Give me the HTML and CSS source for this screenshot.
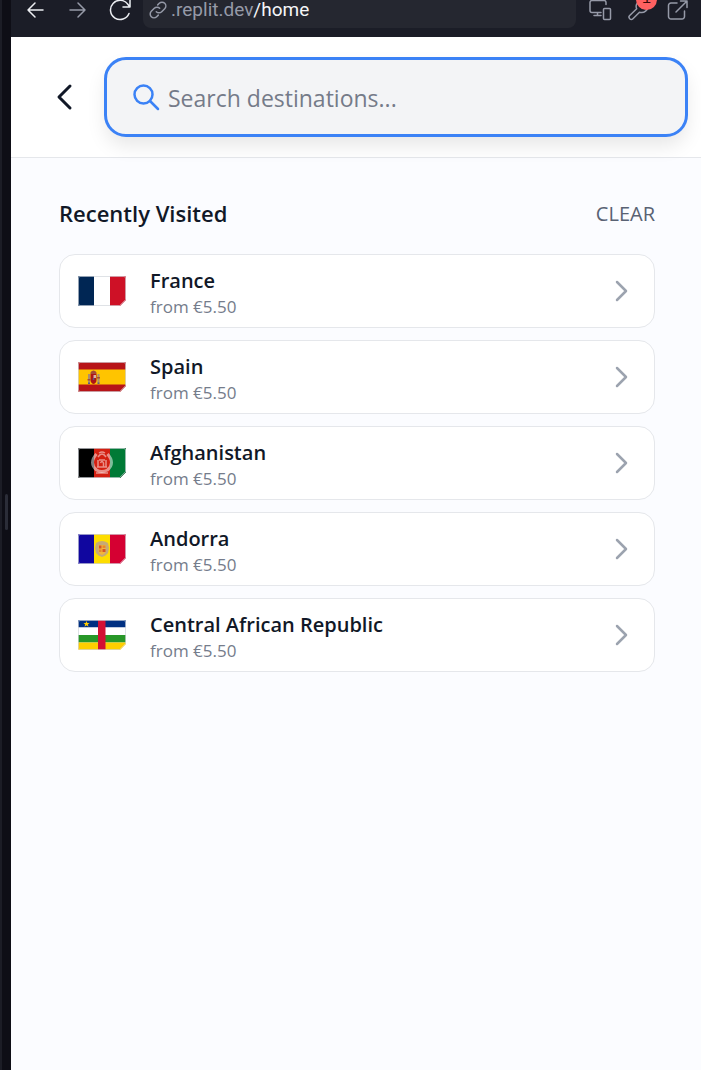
FILE: index.html
```html
<!DOCTYPE html>
<html lang="en">
<head>
<meta charset="utf-8">
<meta name="viewport" content="width=device-width, initial-scale=1">
<title>Home</title>
<link rel="stylesheet" href="styles.css">
</head>
<body>
<div class="workspace">
  <div class="gutter"><span class="grip"></span></div>
  <div class="pane">
    <div class="toolbar">
      <button class="tool" aria-label="Back"><svg width="20" height="20" viewBox="0 0 20 20"><path d="M18 10H3M10 3L3 10l7 7"/></svg></button>
      <button class="tool dim" aria-label="Forward"><svg width="20" height="20" viewBox="0 0 20 20"><path d="M3 10h15M11 3l7 7-7 7"/></svg></button>
      <button class="tool reload" aria-label="Reload"><svg width="24" height="24" viewBox="0 0 24 24"><path d="M22 15.500A9.600 9.600 0 1 1 20.800 6.200L22.500 8.500M23 2v7h-7"/></svg></button>
      <div class="address">
        <svg class="dim" width="18" height="18" viewBox="0 0 18 18"><path d="M7.300 10.700a3.800 3.800 0 0 0 5.400 0l3-3a3.800 3.800 0 0 0-5.400-5.400L8.700 3.900M10.700 7.300a3.800 3.800 0 0 0-5.400 0l-3 3a3.800 3.800 0 0 0 5.400 5.400l1.600-1.600"/></svg>
        <span class="url">.replit.dev<span class="path">/home</span></span>
      </div>
      <div class="tools">
        <button class="tool dim" aria-label="Devices"><svg width="24" height="24" viewBox="0 0 24 24"><path d="M18 6.500V4.500a2 2 0 0 0-2-2H4a2 2 0 0 0-2 2v8a2 2 0 0 0 2 2h9M6 17.500h7M9.500 14.500v3"/><rect x="15.500" y="10.500" width="7" height="11" rx="1"/></svg></button>
        <button class="tool dim" aria-label="Developer tools, 1 issue"><svg width="24" height="24" viewBox="0 0 24 24"><path d="M20.500 7.500l-3 3-3-1-1-3 3-3c-3-1-6 .5-7 3-.6 1.600-.4 3 .2 4.300L2.700 17.500a2.200 2.200 0 0 0 3.200 3.200l6.600-6.500c4.500 1.500 9-2 8-6.700z"/></svg><span class="badge">1</span></button>
        <button class="tool dim" aria-label="Open in new tab"><svg width="24" height="24" viewBox="0 0 24 24"><path d="M11 5H5a2.500 2.500 0 0 0-2.500 2.500v11A2.500 2.500 0 0 0 5 21h11a2.500 2.500 0 0 0 2.500-2.500V13M10 14L21 3M14.500 3H21v6.500"/></svg></button>
      </div>
    </div>
    <header class="header">
      <button class="back" aria-label="Go back"><svg width="32" height="32" viewBox="0 0 32 32"><path d="M21 5L10 16l11 11"/></svg></button>
      <label class="search">
        <svg width="28" height="28" viewBox="0 0 28 28"><circle cx="11.500" cy="11.500" r="9"/><path d="M18 18l8 8"/></svg>
        <input type="text" aria-label="Search destinations" placeholder="Search destinations...">
      </label>
    </header>
    <main class="content">
      <div class="heading">
        <h2 class="title">Recently Visited</h2>
        <button class="clear">CLEAR</button>
      </div>
      <div class="list">
        <button class="card">
          <svg class="flag" viewBox="0 0 48 30"><path fill="#fff" d="M0 0h48v30H0z"/><path fill="#002654" d="M0 0h16v30H0z"/><path fill="#ce1126" d="M32 0h16v30H32z"/><path class="edge" d="M2 .5h44a1.500 1.500 0 0 1 1.500 1.500v21.800l-5.700 5.700H2A1.500 1.500 0 0 1 .5 28V2A1.500 1.500 0 0 1 2 .5z"/></svg>
          <span class="info"><span class="name">France</span><span class="price">from €5.50</span></span>
          <svg class="chevron" viewBox="0 0 24 24"><path d="M7 3l9 9-9 9"/></svg>
        </button>
        <button class="card">
          <svg class="flag" viewBox="0 0 48 30"><path fill="#b71418" d="M0 0h48v30H0z"/><path fill="#ffc400" d="M0 7.500h48v15H0z"/><path fill="#ad1519" d="M12.500 12h6v6q0 3-3 4-3-1-3-4z"/><path fill="#aa8c73" d="M10 12h2v9h-2zM19.500 12h2v9h-2z"/><path fill="#a64b36" d="M12.500 12q-.5-3 3-3.500 3.500.5 3 3.500zM9.500 17h3v1.500h-3zM19 15h3v1.500h-3z"/><path fill="#d6b4aa" d="M15.500 13h2.500v3h-2.500z"/><path fill="#585d86" d="M14.800 16h1.500v2h-1.500zM10 20.500h2v1.500h-2zM19.500 20.500h2v1.500h-2z"/><path class="edge" d="M2 .5h44a1.500 1.500 0 0 1 1.500 1.500v21.800l-5.700 5.700H2A1.500 1.500 0 0 1 .5 28V2A1.500 1.500 0 0 1 2 .5z"/></svg>
          <span class="info"><span class="name">Spain</span><span class="price">from €5.50</span></span>
          <svg class="chevron" viewBox="0 0 24 24"><path d="M7 3l9 9-9 9"/></svg>
        </button>
        <button class="card">
          <svg class="flag" viewBox="0 0 48 30"><path fill="#000" d="M0 0h48v30H0z"/><path fill="#d32011" d="M16 0h16v30H16z"/><path fill="#007a36" d="M32 0h16v30H32z"/><g fill="none" stroke="#fff" stroke-opacity=".5"><path stroke-width="3" d="M18.500 6q-8 9 0 16 5 3 11 0 8-7 0-16"/><path stroke-width="1.500" d="M20 9q4-6 8 0M19 19h10M20 12v7M28 12v7M21 12h6M22.500 15q1.500-3 3 0v4M18 25h12M21 5q3-2 6 0"/></g><path class="edge" d="M2 .5h44a1.500 1.500 0 0 1 1.500 1.500v21.800l-5.700 5.700H2A1.500 1.500 0 0 1 .5 28V2A1.500 1.500 0 0 1 2 .5z"/></svg>
          <span class="info"><span class="name">Afghanistan</span><span class="price">from €5.50</span></span>
          <svg class="chevron" viewBox="0 0 24 24"><path d="M7 3l9 9-9 9"/></svg>
        </button>
        <button class="card">
          <svg class="flag" viewBox="0 0 48 30"><path fill="#10069f" d="M0 0h16v30H0z"/><path fill="#fedd00" d="M16 0h16v30H16z"/><path fill="#d50032" d="M32 0h16v30H32z"/><path fill="#c6aa76" d="M18 9l3-1.500 3-.5 3 .5 3 1.500 1 5-1 5-2.500 2.500-3.500 1.500-3.500-1.500L18 19l-1-5z"/><path fill="#f2b53a" d="M20.500 11h7v7q-1 2.500-3.500 3-2.500-.5-3.500-3z"/><path fill="#d4532a" d="M21 11.500h2.500v3H21zM24.500 15h3v3h-3z"/><path fill="#e6852e" d="M24.500 11.500h3V14h-3zM21 15.500h2.500v2.500H21z"/><path class="edge" d="M2 .5h44a1.500 1.500 0 0 1 1.500 1.500v21.800l-5.700 5.700H2A1.500 1.500 0 0 1 .5 28V2A1.500 1.500 0 0 1 2 .5z"/></svg>
          <span class="info"><span class="name">Andorra</span><span class="price">from €5.50</span></span>
          <svg class="chevron" viewBox="0 0 24 24"><path d="M7 3l9 9-9 9"/></svg>
        </button>
        <button class="card">
          <svg class="flag" viewBox="0 0 48 30"><path fill="#003082" d="M0 0h48v7.500H0z"/><path fill="#fff" d="M0 7.500h48V15H0z"/><path fill="#289728" d="M0 15h48v7.500H0z"/><path fill="#ffce00" d="M0 22.500h48V30H0z"/><path fill="#d21034" d="M20 0h7.500v30H20z"/><path fill="#ffce00" d="M8.500 1l.8 2h2.200l-1.700 1.400.7 2.300-2-1.400-2 1.400.7-2.300L5.500 3h2.200z"/><path class="edge" d="M2 .5h44a1.500 1.500 0 0 1 1.500 1.500v21.800l-5.700 5.700H2A1.500 1.500 0 0 1 .5 28V2A1.500 1.500 0 0 1 2 .5z"/></svg>
          <span class="info"><span class="name">Central African Republic</span><span class="price">from €5.50</span></span>
          <svg class="chevron" viewBox="0 0 24 24"><path d="M7 3l9 9-9 9"/></svg>
        </button>
      </div>
    </main>
  </div>
</div>
</body>
</html>
```
FILE: styles.css
```css
* { box-sizing: border-box; }
body {
  margin: 0;
  font-family: "Open Sans", "Noto Sans", sans-serif;
  color: #111827;
}
button {
  margin: 0;
  padding: 0;
  border: 0;
  background: none;
  font: inherit;
  color: inherit;
  text-align: left;
}
svg { display: block; flex: none; }
.workspace { display: flex; min-height: 100vh; }
.gutter {
  flex: none;
  display: flex;
  align-items: center;
  justify-content: flex-end;
  width: 11px;
  padding: 0 3px 46px 0;
  border-left: 2px solid #1c1d26;
  background: #0e0e16;
}
.grip { width: 3px; height: 36px; border-radius: 2px; background: #2b2d38; }
.pane { flex: 1; min-width: 0; display: flex; flex-direction: column; background: #fbfcff; }

.toolbar {
  display: flex;
  align-items: flex-end;
  height: 37px;
  padding: 0 11px 9px 3px;
  background: #1b1d27;
}
.tool {
  position: relative;
  flex: none;
  display: flex;
  align-items: center;
  justify-content: center;
  width: 42px;
  height: 36px;
  color: #eceef2;
}
.toolbar svg { fill: none; stroke: currentColor; stroke-width: 1.500; stroke-linecap: round; stroke-linejoin: round; }
.reload { margin-right: 3px; }
.tool.dim, .address .dim { color: #969aa8; }
.address {
  flex: 1;
  min-width: 0;
  display: flex;
  align-items: center;
  gap: 4px;
  height: 36px;
  padding: 0 6px;
  border-radius: 8px;
  background: #252730;
}
.url { font: 19px/20px Roboto, sans-serif; color: #969aa8; }
.path { color: #f5f6f8; }
.tools { display: flex; gap: 15px; padding-left: 12px; }
.tools .tool { width: 24px; }
.badge {
  position: absolute;
  top: -3px;
  right: -6px;
  width: 21px;
  height: 21px;
  border-radius: 50%;
  background: #ff6161;
  color: #3b0a0a;
  font: 15px/21px "Liberation Mono", monospace;
  text-align: center;
}

.header {
  display: flex;
  align-items: center;
  gap: 23px;
  padding: 20px 13px 20px 38px;
  border-bottom: 1px solid #e5e7eb;
  background: #fff;
}
.back svg { fill: none; stroke: #111827; stroke-width: 3; stroke-linecap: round; stroke-linejoin: round; }
.search {
  flex: 1;
  min-width: 0;
  display: flex;
  align-items: center;
  gap: 8px;
  height: 80px;
  padding: 0 25px;
  border: 3px solid #3b82f6;
  border-radius: 22px;
  background: #f3f4f6;
  box-shadow: 0 10px 20px -2px rgba(0, 0, 0, .1);
}
.search svg { fill: none; stroke: #3b82f6; stroke-width: 2.500; stroke-linecap: round; }
.search input {
  flex: 1;
  min-width: 0;
  padding: 2px 0 0;
  border: 0;
  outline: 0;
  background: none;
  font: 23px/32px "Open Sans", sans-serif;
  color: #111827;
}
.search input::placeholder { color: #757b89; opacity: 1; }

.content { padding: 40px 46px 40px 48px; }
.heading { display: flex; align-items: center; justify-content: space-between; height: 32px; margin-bottom: 24px; }
.title { margin: 0; font-size: 22px; line-height: 30px; padding-bottom: 2px; font-weight: 600; }
.clear { font-size: 20px; line-height: 32px; color: #596273; }
.list { display: flex; flex-direction: column; gap: 12px; }
.card {
  display: flex;
  align-items: center;
  gap: 24px;
  height: 74px;
  padding: 0 20px 0 18px;
  border: 1px solid #e5e7eb;
  border-radius: 16px;
  background: #fff;
}
.flag {
  width: 48px;
  height: 30px;
  clip-path: polygon(0 1px, 1px 0, 47px 0, 48px 1px, 48px 24px, 42px 30px, 1px 30px, 0 29px);
}
.edge { fill: none; stroke: #d1d5db; stroke-opacity: .7; }
.info { flex: 1; min-width: 0; display: flex; flex-direction: column; padding-top: 6px; }
.name { font-size: 20px; line-height: 26px; font-weight: 600; }
.price { font-size: 17px; line-height: 26px; color: #757c8b; }
.chevron { width: 24px; height: 24px; fill: none; stroke: #9ca3af; stroke-width: 2.500; stroke-linecap: round; stroke-linejoin: round; }
```
